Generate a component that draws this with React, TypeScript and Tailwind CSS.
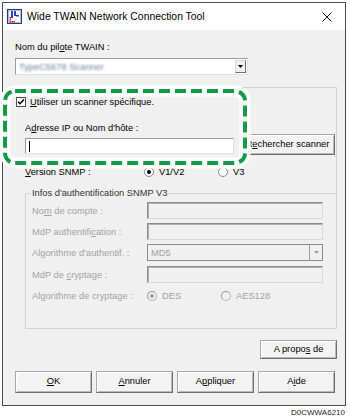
import React from "react";

function U({ c }: { c: string }) {
  return <span className="underline underline-offset-[1px] decoration-[1px]">{c}</span>;
}

function Radio({ checked, disabled }: { checked?: boolean; disabled?: boolean }) {
  return (
    <span
      className={
        disabled
          ? "flex h-[10px] w-[10px] shrink-0 items-center justify-center rounded-full border border-[#b4b4b4] border-t-[#9a9a9a] border-l-[#9a9a9a] bg-[#f0f0f0]"
          : "flex h-[10px] w-[10px] shrink-0 items-center justify-center rounded-full border border-[#8a8a8a] bg-white"
      }
    >
      {checked && (
        <span className={disabled ? "h-[4px] w-[4px] rounded-full bg-[#a0a0a0]" : "h-[4px] w-[4px] rounded-full bg-black"} />
      )}
    </span>
  );
}

function Btn({ children, w }: { children: React.ReactNode; w: string }) {
  return (
    <div
      className={`${w} flex h-full items-center justify-center border border-[#a8a8a8] border-r-[#6e6e6e] border-b-[#6e6e6e] bg-[#f3f3f3] text-[9.3px] text-black shadow-[inset_1px_1px_0_#ffffff,inset_-1px_-1px_0_#b9b9b9]`}
    >
      <span className="whitespace-pre">{children}</span>
    </div>
  );
}

function Field() {
  return (
    <div className="h-[17px] w-[176px] border border-[#d9d9d9] border-t-[#8c8c8c] border-l-[#8c8c8c] bg-[#f0f0f0] shadow-[inset_1px_1px_0_#b0b0b0]" />
  );
}

function GrayLabel({ children }: { children: React.ReactNode }) {
  return <div className="w-[115px] shrink-0 text-[9.3px] leading-[12px] text-[#a3a3a3]">{children}</div>;
}

export default function App() {
  return (
    <div className="relative h-[420px] w-[350px] overflow-hidden bg-white font-['Liberation_Sans',Arial,sans-serif]">
      <div className="pl-[2px] pt-[2px]">
        <div className="flex h-[404px] w-[344px] flex-col border border-[#4d4d4d]">
          {/* title bar */}
          <div className="flex h-[27px] shrink-0 items-center bg-white pl-[4px] pr-[13px]">
            <svg width="15" height="15" viewBox="0 0 15 15" className="shrink-0">
              <rect x="0.5" y="0.5" width="14" height="14" fill="#ffffff" stroke="#24398a" />
              <rect x="1.5" y="1.5" width="12" height="12" fill="none" stroke="#7f8fc8" strokeWidth="0.6" />
              <rect x="4" y="2" width="2" height="7" fill="#2a47b0" />
              <rect x="7" y="2" width="2" height="5" fill="#2a47b0" />
              <rect x="9" y="6" width="3" height="1.5" fill="#2a47b0" />
              <rect x="2.5" y="10" width="1.5" height="1.5" fill="#e0201c" />
              <rect x="2.5" y="12" width="1.5" height="1.5" fill="#e0201c" />
              <rect x="4.5" y="12" width="1.5" height="1.5" fill="#e0201c" />
              <rect x="6.5" y="12" width="1.5" height="1.5" fill="#e0201c" />
              <rect x="2.5" y="8" width="1.5" height="1.5" fill="#e0201c" />
            </svg>
            <div className="ml-[5px] text-[10.4px] leading-[12px] text-black">Wide TWAIN Network Connection Tool</div>
            <div className="flex-1" />
            <svg width="10" height="10" viewBox="0 0 10 10">
              <path d="M0.5 0.5 L9.5 9.5 M9.5 0.5 L0.5 9.5" stroke="#1a1a1a" strokeWidth="1" />
            </svg>
          </div>

          {/* body */}
          <div className="flex flex-1 flex-col bg-[#f0f0f0]">
            <div className="ml-[12px] mt-[11px] h-[12px] text-[9.3px] leading-[12px] text-black">
              Nom du pil<U c="o" />te TWAIN :
            </div>
            <div className="ml-[12px] mt-[5px] flex h-[17px] w-[233px] items-center border border-[#e3e3e3] border-t-[#9a9a9a] border-l-[#9a9a9a] bg-white">
              <div className="ml-[3px] flex-1 text-[9.3px] leading-[12px] text-[#6c7ca4] blur-[0.9px]">TypeC5678 Scanner</div>
              <div className="mr-[1px] flex h-[13px] w-[11px] items-center justify-center border border-[#d5d5d5] border-r-[#6e6e6e] border-b-[#6e6e6e] bg-[#f0f0f0]">
                <svg width="5" height="3" viewBox="0 0 5 3">
                  <path d="M0 0 H5 L2.5 3 Z" fill="#000" />
                </svg>
              </div>
            </div>

            {/* outer group */}
            <div className="ml-[7px] mt-[12px] flex w-[327px] flex-col border-t border-r border-[#d2d2d2]">
              <div className="ml-[6px] mt-[9px] flex h-[10px] items-center">
                <div className="flex h-[10px] w-[10px] items-center justify-center border border-[#555] bg-white">
                  <svg width="8" height="8" viewBox="0 0 8 8">
                    <path d="M1 3.8 L3 5.8 L7 1.6" stroke="#000" strokeWidth="1.5" fill="none" />
                  </svg>
                </div>
                <div className="ml-[4px] text-[9.3px] leading-[12px] text-black">
                  <U c="U" />tiliser un scanner spécifique.
                </div>
              </div>
              <div className="ml-[15px] mt-[16px] h-[11px] text-[9.3px] leading-[11px] text-black">
                A<U c="d" />resse IP ou Nom d'hôte :
              </div>
              <div className="flex h-[21px]">
                <div className="ml-[15px] mt-[4px] flex h-[16px] w-[209px] items-center border border-[#e3e3e3] border-t-[#9a9a9a] border-l-[#9a9a9a] bg-white">
                  <div className="ml-[3px] h-[11px] w-[1px] bg-black" />
                </div>
                <div className="ml-[6px] h-[21px]">
                  <Btn w="w-[95px]">
                    R<U c="e" />chercher scanner
                  </Btn>
                </div>
              </div>
              <div className="mt-[11px] flex h-[12px] items-center text-[9.3px] leading-[12px] text-black">
                <div className="ml-[15px] w-[119px]">
                  <U c="V" />ersion SNMP :
                </div>
                <Radio checked />
                <div className="ml-[5px] w-[59px]">V1/V2</div>
                <Radio />
                <div className="ml-[5px]">V3</div>
              </div>

              {/* inner group */}
              <div className="relative ml-[15px] mt-[15px] flex h-[136px] flex-col border-t border-l border-b border-[#d2d2d2] pl-[6px]">
                <div className="absolute left-[5px] top-[-7px] bg-[#f0f0f0] px-[1px] text-[9.3px] leading-[12px] text-[#333]">
                  Infos d'authentification SNMP V3
                </div>
                <div className="mt-[8px] flex h-[17px] items-center">
                  <GrayLabel>
                    No<U c="m" /> de compte :
                  </GrayLabel>
                  <Field />
                </div>
                <div className="mt-[4px] flex h-[17px] items-center">
                  <GrayLabel>
                    MdP authentifi<U c="c" />ation :
                  </GrayLabel>
                  <Field />
                </div>
                <div className="mt-[4px] flex h-[17px] items-center">
                  <GrayLabel>
                    Al<U c="g" />orithme d'authentif. :
                  </GrayLabel>
                  <div className="flex h-[17px] w-[176px] items-center border border-[#8a8a8a] bg-[#f0f0f0]">
                    <div className="ml-[3px] flex-1 text-[9.3px] leading-[12px] text-[#a0a0a0]">MD5</div>
                    <div className="flex h-[15px] w-[13px] items-center justify-center border-l border-[#a0a0a0] bg-[#f0f0f0]">
                      <svg width="5" height="3" viewBox="0 0 5 3">
                        <path d="M0 0 H5 L2.5 3 Z" fill="#a0a0a0" />
                      </svg>
                    </div>
                  </div>
                </div>
                <div className="mt-[5px] flex h-[17px] items-center">
                  <GrayLabel>
                    MdP de <U c="c" />ryptage :
                  </GrayLabel>
                  <Field />
                </div>
                <div className="mt-[7px] flex h-[12px] items-center">
                  <GrayLabel>
                    Al<U c="g" />orithme de cryptage :
                  </GrayLabel>
                  <Radio checked disabled />
                  <div className="ml-[5px] w-[59px] text-[9.3px] leading-[12px] text-[#a3a3a3]">DES</div>
                  <Radio disabled />
                  <div className="ml-[5px] text-[9.3px] leading-[12px] text-[#a3a3a3]">AES128</div>
                </div>
              </div>
            </div>

            <div className="mr-[8px] mt-[11px] flex h-[19px] justify-end">
              <Btn w="w-[77px]">
                A propo<U c="s" /> de
              </Btn>
            </div>
            <div className="ml-[12px] mt-[12px] flex h-[22px] gap-[4px]">
              <Btn w="w-[77px]">
                <U c="O" />K
              </Btn>
              <Btn w="w-[77px]">
                <U c="A" />nnuler
              </Btn>
              <Btn w="w-[77px]">
                A<U c="p" />pliquer
              </Btn>
              <Btn w="w-[77px]">
                A<U c="i" />de
              </Btn>
            </div>
          </div>
        </div>
      </div>
      <div className="mt-[2px] pr-[5px] text-right text-[8px] leading-[10px] text-[#222]">D0CWWA6210</div>

      {/* annotation overlay */}
      <svg className="pointer-events-none absolute left-0 top-[84px]" width="256" height="90" viewBox="0 0 256 90">
        <rect x="5" y="7" width="240" height="72" rx="10" fill="none" stroke="#ffffff" strokeWidth="11" />
        <rect x="5" y="7" width="240" height="72" rx="10" fill="none" stroke="#139a49" strokeWidth="4" strokeDasharray="11 5" />
      </svg>
    </div>
  );
}
